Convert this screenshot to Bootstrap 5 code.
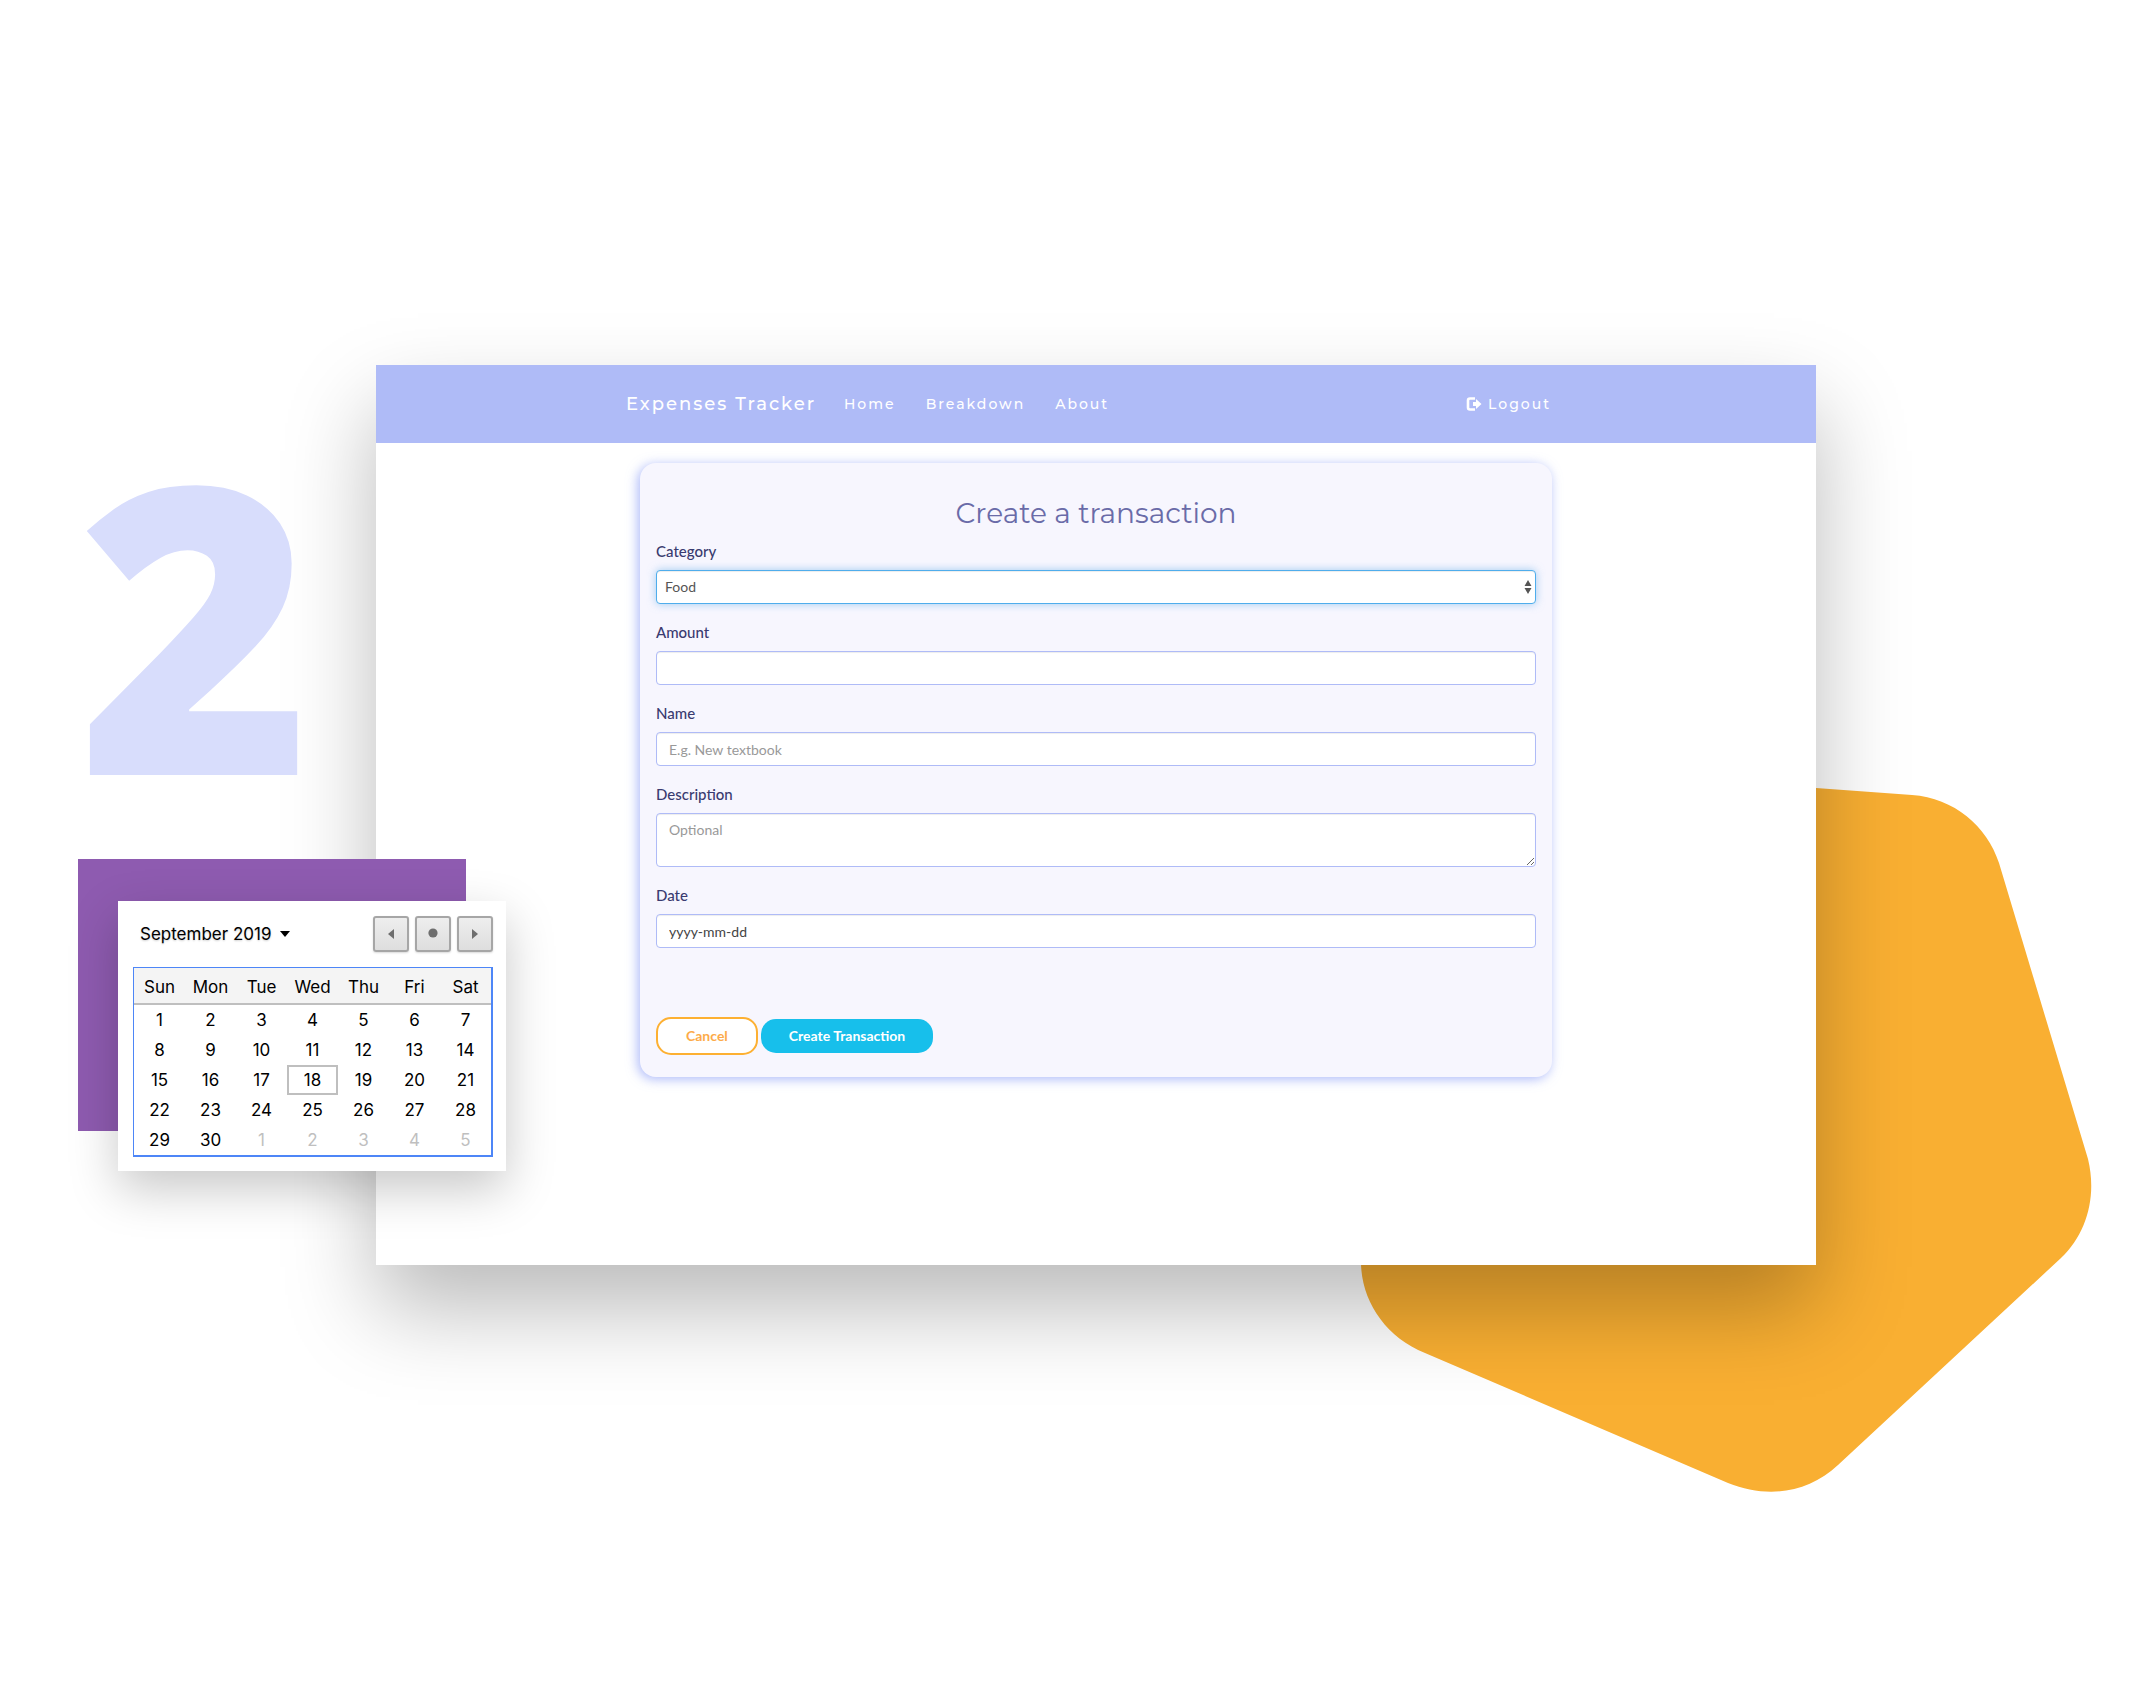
<!DOCTYPE html>
<html lang="en">
<head>
<meta charset="utf-8">
<meta name="viewport" content="width=device-width, initial-scale=1">
<title>Expenses Tracker</title>
<link href="https://cdn.jsdelivr.net/npm/bootstrap@5.3.0/dist/css/bootstrap.min.css" rel="stylesheet">
<style>
  body { background: #fff; font-family: Lato, "Liberation Sans", sans-serif; }
  .stage { padding-top: 365px; padding-right: 336px; overflow: hidden; isolation: isolate; }
  .blob { right: 60px; top: 780px; width: 732px; z-index: -1; }

  /* left column: step number and calendar */
  .step-col { flex: 0 0 376px; min-width: 0; width: 376px; padding-top: 75px; z-index: 2; }
  .step-number { font: 800 400px/360px "Open Sans", sans-serif; color: #d8ddfc; padding-left: 78px; z-index: -1; }
  .picker-wrap { margin: 59px 0 0 78px; width: 388px; }
  .picker-back { height: 272px; background: #8e5bb0; }
  .picker { margin: -230px -40px 0 40px; height: 270px; padding: 15px 13px 14px 15px; background: #fff;
    box-shadow: 0 18px 46px rgba(0,0,0,.22); position: relative; font-family: Inter, sans-serif; font-size: 17px; color: #000; }
  .month-btn { font-size: 17px; line-height: 36px; padding: 0 7px; border: 0; background: none; color: #000; text-shadow: 0 1px 2px rgba(0,0,0,.2); }
  .step-btns { gap: 6px; }
  .step-btn { width: 36px; height: 36px; padding: 0; border: 2px solid #a6a6a6; border-radius: 3px; background: linear-gradient(#eee, #dedede);
    display: flex; align-items: center; justify-content: center; box-shadow: 0 1px 2px rgba(0,0,0,.15); }
  .days { table-layout: fixed; width: 100%; margin-top: 15px; border: 2px solid #4d86f7; border-width: 1px 2px 2px 1px; border-collapse: separate; border-spacing: 0; text-align: center; }
  .days th { height: 37px; padding: 2px 0 0; font-weight: 400; background: #f4f4f4; border-bottom: 2px solid #bfbfbf; line-height: 24px; }
  .days td { height: 30px; padding: 0; line-height: 24px; }
  .days .today { border: 2px solid #bfbfbf; }
  .days .other { color: #bfbfbf; }

  /* application window */
  .app { min-height: 900px; background: #fff; box-shadow: 0 44px 84px rgba(0,0,0,.27); }
  .topbar { height: 78px; background: #afbbf7; font-family: Montserrat, Inter, sans-serif; letter-spacing: 2px; padding: 0; }
  .topbar .inner { width: 100%; max-width: 940px; padding-right: 15px; }
  .topbar a { color: #fff; text-decoration: none; font-size: 14px; font-weight: 500; line-height: 24px; }
  .topbar .brand { font-size: 18px; min-width: 218px; }
  .topbar .links { gap: 30px; }
  .topbar .logout svg { margin-right: 6px; }

  .panel { max-width: 912px; margin: 20px auto; padding: 30px 16px 22px; border-radius: 16px; background: #f7f6fe;
    box-shadow: -2px 2px 12px rgba(120,140,245,.62); }
  .panel h1 { font: 400 28px/40px Montserrat, Inter, sans-serif; color: #6a6ba8; text-align: center; margin: 0; }
  .panel label { display: block; font-size: 15px; line-height: 20px; font-weight: 500; color: #3a3b70; padding-top: 18px; margin-bottom: 9px; }
  .panel .first label { padding-top: 8px; }
  .panel .form-control { height: 34px; padding: 6px 12px; font-size: 14px; line-height: 20px; border: 1px solid #afbbf7; border-radius: 4px; color: #555; box-shadow: inset 0 1px 1px rgba(0,0,0,.075); background-color: #fff; }
  .panel .form-control::placeholder { color: #999; opacity: 1; }
  .panel textarea.form-control { height: 54px; min-height: 54px; }
  .panel select.form-control { padding-left: 8px; border-color: #4fadec; box-shadow: inset 0 1px 1px rgba(0,0,0,.075), 0 0 9px rgba(102,175,233,.6);
    background: #fff url("data:image/svg+xml,%3Csvg xmlns='http://www.w3.org/2000/svg' viewBox='0 0 8 14'%3E%3Cpath d='M4 0 7.5 6h-7zM4 14 .5 8h7z' fill='%23555'/%3E%3C/svg%3E") no-repeat right 3px center / 8px 14px; }
  .panel .date-box::placeholder { color: #444; }
  .panel .actions { margin-top: 69px; gap: 3px; }
  .panel .btn { font-size: 14px; line-height: 20px; font-weight: 700; border-radius: 15px; }
  .btn-back { padding: 7px 28px; border: 2px solid #fdb032; color: #fdab4a; background: #fff; }
  .btn-make { padding: 7px 28px; border: 0; color: #fff; background: #17bfeb; }
</style>
<script src="https://cdn.jsdelivr.net/npm/bootstrap@5.3.0/dist/js/bootstrap.bundle.min.js"></script>
</head>
<body>
<div class="stage d-flex align-items-start min-vh-100 position-relative">
  <svg class="blob position-absolute" viewBox="1360 780 732 734" aria-hidden="true">
    <path fill="#f9af32" d="M1600 776 1816 788 1912 795C1954 798 1987 826 1999 863L2088 1159C2097 1196 2087 1233 2061 1258L1838 1465C1808 1493 1768 1499 1728 1483L1425 1353C1385 1337 1361 1300 1361 1262V1100Z"/>
  </svg>

  <aside class="step-col position-relative">
    <div class="step-number position-relative">2</div>
    <div class="picker-wrap">
      <div class="picker-back"></div>
      <div class="picker">
        <div class="d-flex justify-content-between align-items-center">
          <button type="button" class="month-btn d-flex align-items-center">September 2019
            <svg class="ms-2" width="12" height="6" viewBox="0 0 12 6"><path d="M1 0h10L6 6z"/></svg>
          </button>
          <div class="step-btns d-flex">
            <button type="button" class="step-btn" aria-label="Previous month"><svg width="10" height="10" viewBox="0 0 10 10"><path d="M8 0v10L2 5z" fill="#6e6e6e"/></svg></button>
            <button type="button" class="step-btn" aria-label="Today"><svg width="10" height="14" viewBox="0 0 10 14"><circle cx="5" cy="6" r="4.6" fill="#6e6e6e"/></svg></button>
            <button type="button" class="step-btn" aria-label="Next month"><svg width="10" height="10" viewBox="0 0 10 10"><path d="M2 0v10l6-5z" fill="#6e6e6e"/></svg></button>
          </div>
        </div>
        <table class="days">
          <thead><tr><th>Sun</th><th>Mon</th><th>Tue</th><th>Wed</th><th>Thu</th><th>Fri</th><th>Sat</th></tr></thead>
          <tbody>
            <tr><td>1</td><td>2</td><td>3</td><td>4</td><td>5</td><td>6</td><td>7</td></tr>
            <tr><td>8</td><td>9</td><td>10</td><td>11</td><td>12</td><td>13</td><td>14</td></tr>
            <tr><td>15</td><td>16</td><td>17</td><td class="today">18</td><td>19</td><td>20</td><td>21</td></tr>
            <tr><td>22</td><td>23</td><td>24</td><td>25</td><td>26</td><td>27</td><td>28</td></tr>
            <tr><td>29</td><td>30</td><td class="other">1</td><td class="other">2</td><td class="other">3</td><td class="other">4</td><td class="other">5</td></tr>
          </tbody>
        </table>
      </div>
    </div>
  </aside>

  <main class="app flex-grow-1">
    <nav class="navbar topbar">
      <div class="inner d-flex align-items-center mx-auto">
        <a class="brand" href="#">Expenses Tracker</a>
        <div class="links d-flex">
          <a href="#">Home</a><a href="#">Breakdown</a><a href="#">About</a>
        </div>
        <a class="logout ms-auto d-flex align-items-center" href="#"><svg width="16" height="14" viewBox="0 0 16 14"><path d="M9 1.500H4Q2 1.500 2 3.500V10.500Q2 12.500 4 12.500H9" fill="none" stroke="#fff" stroke-width="2.600"/><path d="M7 5h3V2l5.500 5-5.500 5V9H7z" fill="#fff"/></svg>Logout</a>
      </div>
    </nav>
    <form class="panel">
      <h1>Create a transaction</h1>
      <div class="first"><label for="category">Category</label>
        <select id="category" class="form-control"><option>Food</option></select></div>
      <div><label for="amount">Amount</label><input id="amount" type="text" class="form-control"></div>
      <div><label for="name">Name</label><input id="name" type="text" class="form-control" placeholder="E.g. New textbook"></div>
      <div><label for="description">Description</label><textarea id="description" class="form-control d-block" placeholder="Optional"></textarea></div>
      <div><label for="date">Date</label><input id="date" type="text" class="form-control date-box" placeholder="yyyy-mm-dd"></div>
      <div class="actions d-flex align-items-center">
        <button type="button" class="btn btn-back">Cancel</button>
        <button type="submit" class="btn btn-make">Create Transaction</button>
      </div>
    </form>
  </main>
</div>
</body>
</html>
